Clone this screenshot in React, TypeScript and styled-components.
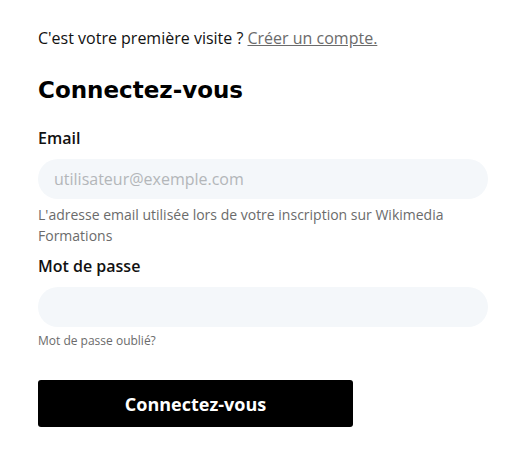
import React from 'react';
import styled, { createGlobalStyle } from 'styled-components';

const GlobalStyle = createGlobalStyle`
  body {
    margin: 0;
    background: #ffffff;
    font-family: 'Open Sans', 'Noto Sans', sans-serif;
    color: #111;
  }
`;

const Wrapper = styled.div`
  width: 450px;
  padding: 26px 0 0 38px;
  display: flex;
  flex-direction: column;
`;

const Intro = styled.p`
  margin: 0;
  font-size: 16px;
  line-height: 24px;
  color: #111;

  a {
    color: #6b6b6b;
    text-decoration: underline;
  }
`;

const Title = styled.h1`
  margin: 24px 0 0;
  font-family: 'DejaVu Sans', sans-serif;
  font-weight: 700;
  font-size: 23px;
  line-height: 32px;
  color: #000;
`;

const Form = styled.form`
  display: flex;
  flex-direction: column;
  margin-top: 20px;
`;

const Label = styled.label`
  font-size: 16px;
  font-weight: 600;
  line-height: 24px;
  color: #111;
`;

const Input = styled.input`
  box-sizing: border-box;
  width: 100%;
  height: 40px;
  margin-top: 9px;
  border: none;
  border-radius: 20px;
  background: #f4f7fa;
  padding: 0 16px;
  font-family: 'Open Sans', sans-serif;
  font-size: 16px;
  color: #111;
  outline: none;

  &::placeholder {
    color: #b3b6b9;
  }
`;

const Hint = styled.p<{ $small?: boolean }>`
  margin: 5px 0 0;
  font-size: ${p => (p.$small ? '12px' : '14px')};
  line-height: ${p => (p.$small ? '18px' : '21px')};
  color: #6b6b6b;
`;

const Field = styled.div`
  display: flex;
  flex-direction: column;

  & + & {
    margin-top: 8px;
  }
`;

const Submit = styled.button`
  margin-top: 30px;
  width: 315px;
  height: 47px;
  border: none;
  border-radius: 3px;
  background: #000;
  color: #fff;
  font-family: 'Open Sans', sans-serif;
  font-size: 18px;
  font-weight: 700;
  cursor: pointer;
`;

export default function App() {
  return (
    <>
      <GlobalStyle />
      <Wrapper>
        <Intro>
          C'est votre première visite ? <a href="#">Créer un compte.</a>
        </Intro>
        <Title>Connectez-vous</Title>
        <Form onSubmit={e => e.preventDefault()}>
          <Field>
            <Label htmlFor="email">Email</Label>
            <Input id="email" type="email" placeholder="utilisateur@exemple.com" />
            <Hint>L'adresse email utilisée lors de votre inscription sur Wikimedia Formations</Hint>
          </Field>
          <Field>
            <Label htmlFor="password">Mot de passe</Label>
            <Input id="password" type="password" />
            <Hint $small>Mot de passe oublié?</Hint>
          </Field>
          <Submit type="submit">Connectez-vous</Submit>
        </Form>
      </Wrapper>
    </>
  );
}
